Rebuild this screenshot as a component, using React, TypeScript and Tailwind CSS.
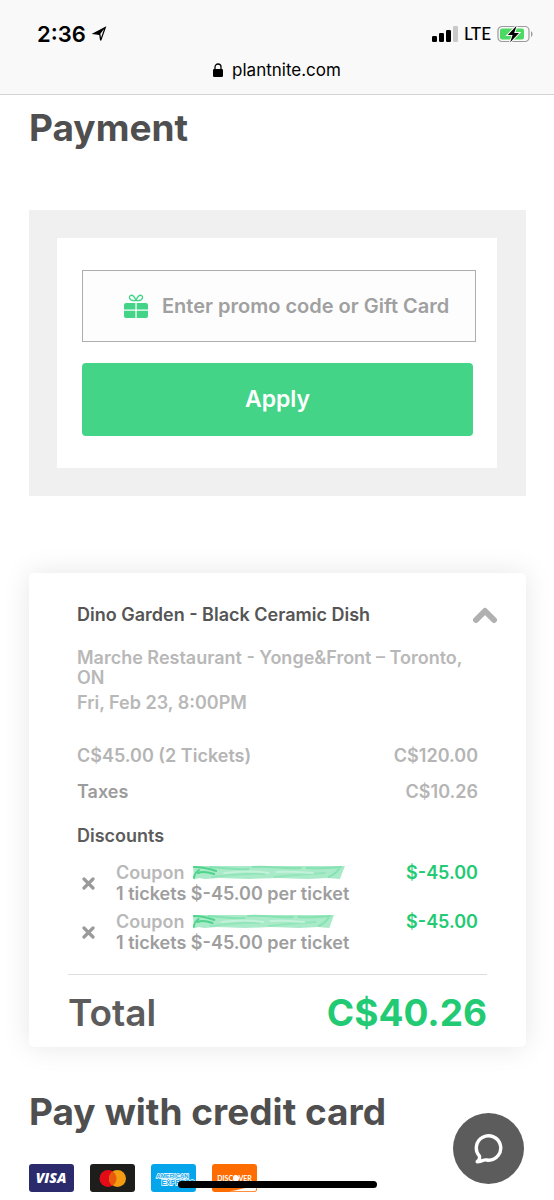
interface Coupon {
  id: number
  detail: string
  amount: string
  scribbleWidth: number
}

interface PriceLine {
  label: string
  amount: string
  labelClass: string
}

const prices: PriceLine[] = [
  { label: "C$45.00 (2 Tickets)", amount: "C$120.00", labelClass: "text-[#b5b5b5]" },
  { label: "Taxes", amount: "C$10.26", labelClass: "text-[#9c9c9c]" },
]

const coupons: Coupon[] = [
  { id: 1, detail: "1 tickets $-45.00 per ticket", amount: "$-45.00", scribbleWidth: 153 },
  { id: 2, detail: "1 tickets $-45.00 per ticket", amount: "$-45.00", scribbleWidth: 142 },
]

function StatusBar() {
  return (
    <header className="border-b border-[#d3d3d3] bg-[#f9f9f9] text-black">
      <div className="flex items-center justify-between pt-5 pr-5 pl-[37px]">
        <div className="flex items-center gap-[6px]">
          <span className="text-[22px] leading-7 font-semibold">2:36</span>
          <svg width="15" height="16" viewBox="0 0 15 16" fill="none" aria-hidden="true">
            <path d="M13.2 1.6 1.8 7.600l6 .8.9 6z" stroke="#000" strokeWidth="1.3" />
            <path d="M13.2 1.6 7.800 8.400 1.800 7.600z" fill="#000" />
          </svg>
        </div>
        <div className="flex items-center gap-[6px]">
          <svg width="26" height="16" viewBox="0 0 26 16" aria-hidden="true">
            <rect x="0" y="10" width="5" height="6" rx="1.2" />
            <rect x="7" y="7" width="5" height="9" rx="1.2" />
            <rect x="14" y="4" width="5" height="12" rx="1.2" />
            <rect x="21" y="0" width="5" height="16" rx="1.2" fill="#c9c9c9" />
          </svg>
          <span className="font-['Lato',sans-serif] text-[17px] leading-7 font-medium">LTE</span>
          <svg width="37" height="18" viewBox="0 0 37 18" aria-hidden="true">
            <rect x="1" y="1.5" width="31" height="15" rx="4" fill="none" stroke="#9b9b9b" strokeWidth="1.2" />
            <path d="M34 6.2c2 .8 2 4.8 0 5.6z" fill="#9b9b9b" />
            <rect x="3" y="3.5" width="24" height="11" rx="2" fill="#4cd964" />
            <path
              d="M19.6.8 10.8 10h4.800l-2.400 7.200L22 8h-4.800z"
              fill="#000"
              stroke="#f9f9f9"
              strokeWidth="2"
              paintOrder="stroke"
            />
          </svg>
        </div>
      </div>
      <div className="flex items-center justify-center gap-[9px] pt-[10px] pb-3">
        <svg width="10" height="14" viewBox="0 0 10 14" aria-hidden="true">
          <rect x="0" y="6" width="10" height="8" rx="1.2" />
          <path d="M2 7V4a3 3 0 0 1 6 0v3" fill="none" stroke="#000" strokeWidth="1.3" />
        </svg>
        <span className="text-[17px] leading-6">plantnite.com</span>
      </div>
    </header>
  )
}

function GiftIcon() {
  return (
    <svg width="24" height="25" viewBox="0 0 24 25" fill="#43d487" aria-hidden="true">
      <path d="M2 9h9.400v6.500H0V11a2 2 0 0 1 2-2zM12.700 9H22a2 2 0 0 1 2 2v4.500H12.700zM0 16.800h11.400V24H2a2 2 0 0 1-2-2zM12.700 16.800H24V22a2 2 0 0 1-2 2h-9.300z" />
      <path
        d="M12 6.500C10.500 2.500 8.500 1 6.800 1.400 4.900 1.900 5 4.600 6.900 5.800c1.700 1 3.800.9 5.100.7zm0 0c1.500-4 3.500-5.500 5.200-5.100 1.900.5 1.800 3.200-.1 4.400-1.700 1-3.800.9-5.100.7z"
        fill="none"
        stroke="#43d487"
        strokeWidth="1.4"
      />
    </svg>
  )
}

function Scribble({ width }: { width: number }) {
  return (
    <svg width={width} height="15" viewBox="0 0 152 15" preserveAspectRatio="none" aria-hidden="true">
      <path d="M1 1h151l-2 5-3 8-12-1-20 1-30-1-28 1-30-1-14 1-6-1-3 1-1-1-1 2z" fill="#a9eac8" />
      <g fill="none" strokeLinecap="round" strokeWidth="2">
        <path d="M2 2c8 0 16 2 22 4M2 13c0-4 2-6 5-8M6 8c4-2 10-1 16 1" stroke="#4fd38d" />
        <path d="M18 2c14 1 22 3 38 2M60 2c20-1 30 2 48 1M114 3c12 1 22 0 34-1" stroke="#86e2b2" />
        <path d="M20 12c18-2 32-4 52-3M82 12c18-2 34-3 50-4" stroke="#93e5ba" />
        <path d="M32 8c14-2 30-2 44 0M84 7c12-1 24 0 36 1" stroke="#c4f1d9" />
        <path d="M136 12c4-2 8-5 10-8" stroke="#86e2b2" />
      </g>
    </svg>
  )
}

function PromoForm() {
  return (
    <section className="bg-[#f0f0f0] p-7 pr-[29px]">
      <form className="flex flex-col gap-[21px] bg-white pt-8 pr-[21px] pb-8 pl-[25px]">
        <label className="flex h-[72px] items-center gap-[14px] border border-[#adadad] bg-[#fdfdfd] pl-[41px]">
          <GiftIcon />
          <input
            type="text"
            aria-label="Promo code or gift card"
            placeholder="Enter promo code or Gift Card"
            className="min-w-0 flex-1 bg-transparent text-[20px] font-semibold outline-none placeholder:text-[#a0a0a0]"
          />
        </label>
        <button
          type="button"
          className="mr-[3px] h-[73px] rounded-[4px] bg-[#43d487] text-[23px] font-semibold text-white"
        >
          Apply
        </button>
      </form>
    </section>
  )
}

function OrderSummary() {
  return (
    <section className="mt-[77px] rounded-[5px] bg-white px-[39px] pt-[30px] pb-3 text-[18px] leading-5 font-semibold shadow-[0_0_28px_rgba(0,0,0,0.1)]">
      <div className="px-[9px]">
        <div className="flex items-center justify-between">
          <h2 className="leading-6 text-[#555555]">Dino Garden - Black Ceramic Dish</h2>
          <button type="button" aria-label="Collapse order" className="-mr-5">
            <svg width="26" height="18" viewBox="0 0 26 18" fill="none" aria-hidden="true">
              <path d="m4 14 9-9 9 9" stroke="#b0b0b0" strokeWidth="6" strokeLinecap="round" strokeLinejoin="round" />
            </svg>
          </button>
        </div>

        <p className="mt-[21px] text-[#b8b8b8]">Marche Restaurant - Yonge&amp;Front – Toronto, ON</p>
        <p className="mt-[5px] text-[#b8b8b8]">Fri, Feb 23, 8:00PM</p>

        {/* Prices */}
        <div className="mt-[33px] flex flex-col gap-4">
          {prices.map((line) => (
            <div key={line.label} className="flex justify-between">
              <span className={line.labelClass}>{line.label}</span>
              <span className="text-[#b5b5b5]">{line.amount}</span>
            </div>
          ))}
        </div>

        {/* Discounts */}
        <h3 className="mt-6 text-[#5c5c5c]">Discounts</h3>
        <ul className="mt-4 flex flex-col gap-[7px]">
          {coupons.map((coupon) => (
            <li key={coupon.id} className="flex items-start leading-[21px]">
              <button type="button" aria-label="Remove coupon" className="mt-[15px] mr-[21px] ml-[5px]">
                <svg width="13" height="13" viewBox="0 0 13 13" aria-hidden="true">
                  <path d="m2 2 9 9M11 2l-9 9" stroke="#9a9a9a" strokeWidth="3.2" strokeLinecap="round" />
                </svg>
              </button>
              <div className="flex-1">
                <div className="flex items-center gap-2 text-[#b8b8b8]">
                  Coupon
                  <Scribble width={coupon.scribbleWidth} />
                </div>
                <div className="text-[#9e9e9e]">{coupon.detail}</div>
              </div>
              <span className="text-[#22cb73]">{coupon.amount}</span>
            </li>
          ))}
        </ul>
      </div>

      {/* Total */}
      <div className="mt-[21px] flex items-center justify-between border-t border-[#dedede] pt-4 text-[37px] leading-[44px]">
        <span className="text-[#5c5c5c]">Total</span>
        <span className="font-bold text-[#22cb73]">C$40.26</span>
      </div>
    </section>
  )
}

function CardLogos() {
  return (
    <div className="mt-[30px] flex gap-4">
      <svg width="45" height="28" viewBox="0 0 45 28" role="img" aria-label="Visa">
        <rect width="45" height="28" rx="3" fill="#2a2a6c" />
        <text x="22" y="19" textAnchor="middle" fontSize="14" fontWeight="800" fontStyle="italic" fontFamily="Open Sans, sans-serif" fill="#fff">
          VISA
        </text>
      </svg>
      <svg width="45" height="28" viewBox="0 0 45 28" role="img" aria-label="Mastercard">
        <rect width="45" height="28" rx="3" fill="#1d1d1b" />
        <circle cx="18" cy="14.5" r="8.5" fill="#e30b17" />
        <circle cx="27.5" cy="14.5" r="8.5" fill="#f39c12" />
        <path d="M22.75 7.450a8.500 8.500 0 0 1 0 14.100 8.500 8.500 0 0 1 0-14.100z" fill="#e8590c" />
      </svg>
      <svg width="45" height="28" viewBox="0 0 45 28" role="img" aria-label="American Express">
        <rect width="45" height="28" rx="3" fill="#05a5ec" />
        <g fontSize="7" fontWeight="700" fontFamily="Liberation Sans, sans-serif" fill="#05a5ec" stroke="#fff" strokeWidth="1.4" paintOrder="stroke">
          <text x="21.5" y="13.5" textAnchor="middle" fontSize="6">AMERICAN</text>
          <text x="27" y="21" textAnchor="middle">EXPRESS</text>
        </g>
      </svg>
      <svg width="45" height="28" viewBox="0 0 45 28" role="img" aria-label="Discover">
        <rect width="45" height="28" rx="3" fill="#ff6d00" />
        <path d="M17 27.200C28 25.500 38 23 44.200 19v6a2.200 2.200 0 0 1-2.200 2.200z" fill="#fff" />
        <text x="22.5" y="17" textAnchor="middle" fontSize="7" fontWeight="700" fontFamily="Lato, sans-serif" fill="#fff">
          DISCOVER
        </text>
        <circle cx="24" cy="14.4" r="3" fill="#fff" />
      </svg>
    </div>
  )
}

export default function App() {
  return (
    <div className="bg-white font-['Inter',sans-serif]">
      <StatusBar />

      <main className="pr-7 pb-2 pl-[29px]">
        <h1 className="pt-[11px] pb-[60px] text-[37px] leading-[44px] font-bold text-[#4f4f4f]">Payment</h1>
        <PromoForm />
        <OrderSummary />
        <h1 className="mt-[43px] text-[37px] leading-[44px] font-bold text-[#4f4f4f]">Pay with credit card</h1>
        <CardLogos />
      </main>

      <button
        type="button"
        aria-label="Open chat"
        className="fixed right-[30px] bottom-4 flex size-[71px] items-center justify-center rounded-full bg-[#5c5c5c]"
      >
        <svg width="30" height="31" viewBox="0 0 30 31" fill="none" aria-hidden="true">
          <path
            d="M5.500 23.200A12.200 12.200 0 1 1 14.500 27.200C12.500 27.100 11 26.500 9.500 27.200c-2 .9-4 1.600-6.300 1.500C5 27.500 6 26 5.500 23.200z"
            stroke="#fff"
            strokeWidth="3.4"
            strokeLinejoin="round"
          />
        </svg>
      </button>

      {/* Home indicator */}
      <div className="fixed bottom-3 left-[178px] right-[177px] h-[7px] rounded-full bg-black" />
    </div>
  )
}
